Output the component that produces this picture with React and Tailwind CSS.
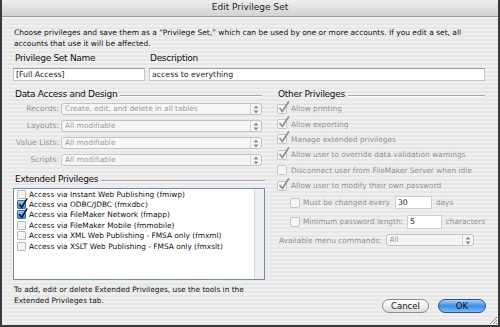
import React from "react";

function Arrows() {
  return (
    <svg width="6" height="9" viewBox="0 0 6 9" className="shrink-0">
      <path d="M3 0.5 L5.5 3.5 H0.5 Z" fill="#8a8a8a" />
      <path d="M3 8.5 L5.5 5.5 H0.5 Z" fill="#8a8a8a" />
    </svg>
  );
}

function Popup({ text, className = "" }) {
  return (
    <div className={"h-[12px] rounded-[3px] border border-[#c2c2c2] bg-[#f6f6f6] flex items-center pl-[3px] pr-[2px] " + className}>
      <span className="flex-1 text-[7.4px] leading-[10px] text-[#9c9c9c] whitespace-nowrap overflow-hidden">{text}</span>
      <div className="h-full border-l border-[#d6d6d6] pl-[2px] flex items-center">
        <Arrows />
      </div>
    </div>
  );
}

function GrayCheck({ checked }) {
  return (
    <div className="relative w-[10px] h-[10px] shrink-0 rounded-[2px] border border-[#c6c6c6] bg-[#f5f5f5]">
      {checked && (
        <svg width="12" height="13" viewBox="0 0 12 13" className="absolute left-[0px] top-[-4px]">
          <path d="M2 7.5 L4.3 10.5 L10.5 1" fill="none" stroke="#8f8f8f" strokeWidth="1.7" strokeLinecap="round" strokeLinejoin="round" />
        </svg>
      )}
    </div>
  );
}

function ListCheck({ checked }) {
  return (
    <div className={"relative w-[9px] h-[9px] shrink-0 rounded-[1px] border " + (checked ? "border-[#3d6fb8] bg-gradient-to-b from-[#9cc3f0] to-[#3f83d8]" : "border-[#b8b8b8] bg-[#f4f4f4]")}>
      {checked && (
        <svg width="10" height="11" viewBox="0 0 10 11" className="absolute left-[0px] top-[-3px]">
          <path d="M1.5 6.5 L3.8 9.2 L8.8 1" fill="none" stroke="#1a1a1a" strokeWidth="1.6" strokeLinecap="round" strokeLinejoin="round" />
        </svg>
      )}
    </div>
  );
}

function SectionHeader({ text }) {
  return (
    <div className="flex items-center h-[14px]">
      <span className="text-[9px] tracking-[-0.3px] leading-[14px] text-[#111] whitespace-nowrap pl-[1px]">{text}</span>
      <div className="flex-1 ml-[3px] mt-[4px] h-[2px] border-t border-[#a8a8a8] border-b border-b-[#fafafa]" />
    </div>
  );
}

export default function App() {
  const popups = [
    ["Records:", "Create, edit, and delete in all tables"],
    ["Layouts:", "All modifiable"],
    ["Value Lists:", "All modifiable"],
    ["Scripts:", "All modifiable"],
  ];
  const ext = [
    [false, "Access via Instant Web Publishing (fmiwp)"],
    [true, "Access via ODBC/JDBC (fmxdbc)"],
    [true, "Access via FileMaker Network (fmapp)"],
    [false, "Access via FileMaker Mobile (fmmobile)"],
    [false, "Access via XML Web Publishing - FMSA only (fmxml)"],
    [false, "Access via XSLT Web Publishing - FMSA only (fmxslt)"],
  ];
  const other = [
    [true, "Allow printing"],
    [true, "Allow exporting"],
    [true, "Manage extended privileges"],
    [true, "Allow user to override data validation warnings"],
    [false, "Disconnect user from FileMaker Server when idle"],
    [true, "Allow user to modify their own password"],
  ];

  return (
    <div className="w-[500px] h-[327px] bg-[#3a3a3a] px-[2px] pb-[2px] flex flex-col font-['DejaVu_Sans',sans-serif] overflow-hidden">
      <div className="h-[17px] shrink-0 bg-gradient-to-b from-[#eeeeee] to-[#d2d2d2] border-b border-[#9c9c9c] flex items-center justify-center">
        <span className="text-[9px] text-[#222]">Edit Privilege Set</span>
      </div>
      <div className="relative flex-1 flex flex-col pl-[12px] pr-[13px] pt-[10px] pb-[12px] bg-[repeating-linear-gradient(to_bottom,#efefef_0px,#efefef_2px,#e7e7e7_2px,#e7e7e7_4px)]">
        <div className="text-[7.5px] leading-[11px] text-[#111] whitespace-nowrap">
          Choose privileges and save them as a “Privilege Set,” which can be used by one or more accounts. If you edit a set, all
          <br />
          accounts that use it will be affected.
        </div>

        <div className="flex gap-[4px] mt-[2px] -ml-[1px]">
          <div className="w-[132px] shrink-0 flex flex-col gap-[3px]">
            <span className="text-[9px] tracking-[-0.3px] leading-[14px] text-[#111] pl-[2px]">Privilege Set Name</span>
            <div className="h-[13px] bg-white border border-[#c4c4c4] border-t-[#9a9a9a] text-[7.8px] leading-[11px] px-[2px] text-[#222]">[Full Access]</div>
          </div>
          <div className="flex-1 flex flex-col gap-[3px]">
            <span className="text-[9px] tracking-[-0.3px] leading-[14px] text-[#111] pl-[1px]">Description</span>
            <div className="h-[13px] bg-white border border-[#c4c4c4] border-t-[#9a9a9a] text-[7.8px] leading-[11px] px-[2px] text-[#222]">access to everything</div>
          </div>
        </div>

        <div className="flex-1 flex gap-[12px] mt-[6px]">
          <div className="w-[251px] shrink-0 flex flex-col">
            <div className="pr-[3px]">
              <SectionHeader text="Data Access and Design" />
            </div>
            <div className="flex flex-col gap-[5px] mt-[2px] pr-[3px]">
              {popups.map(([l, v]) => (
                <div key={l} className="flex items-center gap-[2px]">
                  <span className="w-[45px] text-right text-[7.6px] text-[#959595] whitespace-nowrap">{l}</span>
                  <Popup text={v} className="flex-1" />
                </div>
              ))}
            </div>
            <div className="mt-[6px]">
              <SectionHeader text="Extended Privileges" />
            </div>
            <div className="mt-[2px] -ml-[1px] h-[92px] bg-white border border-[#6f8db5] flex">
              <div className="flex-1 flex flex-col pl-[3px]">
                {ext.map(([c, t]) => (
                  <div key={t} className="h-[10.4px] flex items-center gap-[3px]">
                    <ListCheck checked={c} />
                    <span className="text-[7.4px] text-[#111] whitespace-nowrap">{t}</span>
                  </div>
                ))}
              </div>
              <div className="w-[10px] bg-[#ededed] border-l border-[#dcdcdc]" />
            </div>
            <div className="mt-[5px] text-[7.4px] leading-[10.5px] text-[#111] whitespace-nowrap">
              To add, edit or delete Extended Privileges, use the tools in the
              <br />
              Extended Privileges tab.
            </div>
          </div>

          <div className="flex-1 min-w-0 flex flex-col">
            <SectionHeader text="Other Privileges" />
            <div className="flex flex-col">
              {other.map(([c, t]) => (
                <div key={t} className="h-[15.4px] flex items-center gap-[4px]">
                  <GrayCheck checked={c} />
                  <span className="text-[7.4px] text-[#929292] whitespace-nowrap">{t}</span>
                </div>
              ))}
            </div>
            <div className="flex flex-col gap-[4px] mt-[2px] pl-[13px]">
              <div className="h-[15px] flex items-center">
                <GrayCheck checked={false} />
                <span className="ml-[3px] text-[7.4px] text-[#929292] whitespace-nowrap">Must be changed every</span>
                <div className="ml-[5px] w-[37px] h-[13px] bg-white border border-[#d0d0d0] text-[7.8px] leading-[11px] px-[2px] text-[#222]">30</div>
                <span className="ml-[4px] text-[7.4px] text-[#929292]">days</span>
              </div>
              <div className="h-[15px] flex items-center">
                <GrayCheck checked={false} />
                <span className="ml-[3px] text-[7.4px] text-[#929292] whitespace-nowrap">Minimum password length:</span>
                <div className="ml-[4px] w-[36px] h-[14px] bg-white border border-[#d0d0d0] text-[7.8px] leading-[12px] px-[2px] text-[#222]">5</div>
                <span className="ml-[4px] text-[7.4px] text-[#929292]">characters</span>
              </div>
            </div>
            <div className="flex items-center mt-[5px] pl-[2px]">
              <span className="text-[7.4px] text-[#929292] whitespace-nowrap">Available menu commands:</span>
              <Popup text="All" className="ml-[4px] w-[88px]" />
            </div>
            <div className="mt-auto flex justify-end gap-[9px] -mr-[1px]">
              <div className="w-[47px] h-[14px] rounded-full border border-[#8a8a8a] bg-gradient-to-b from-[#ffffff] via-[#f0f0f0] to-[#dcdcdc] flex items-center justify-center text-[8.5px] text-[#111]">Cancel</div>
              <div className="w-[48px] h-[14px] rounded-full border border-[#2a4f8a] bg-gradient-to-b from-[#a8d0f8] via-[#3f8ae6] to-[#7fbcf5] flex items-center justify-center text-[8.5px] text-[#111]">OK</div>
            </div>
          </div>
        </div>

        <svg width="10" height="10" viewBox="0 0 10 10" className="absolute right-[0px] bottom-[0px]">
          <path d="M9 2 L2 9 M9 5 L5 9 M9 8 L8 9" stroke="#9a9a9a" strokeWidth="1" />
        </svg>
      </div>
    </div>
  );
}
